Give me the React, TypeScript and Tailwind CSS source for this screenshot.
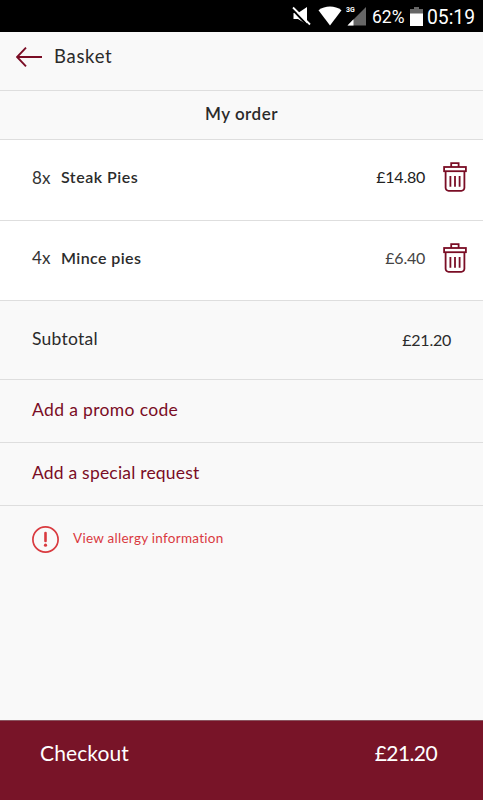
interface OrderItem {
  quantity: number;
  name: string;
  price: string;
  nameClass: string;
  priceClass: string;
}

const items: OrderItem[] = [
  {
    quantity: 8,
    name: 'Steak Pies',
    price: '£14.80',
    nameClass: 'tracking-[0.5px]',
    priceClass: 'text-[#222222]',
  },
  {
    quantity: 4,
    name: 'Mince pies',
    price: '£6.40',
    nameClass: 'tracking-[0.4px]',
    priceClass: 'text-[#444444]',
  },
];

function TrashIcon() {
  return (
    <svg className="w-6 h-[30px]" viewBox="0 0 24 30" fill="none" stroke="#7a0d25" strokeWidth="1.8">
      <path d="M8.2 5V1.2h7.4V5" />
      <rect x="1.1" y="5" width="21.8" height="4.2" />
      <path d="M2.6 9.2v16.6a3 3 0 0 0 3 3h12.8a3 3 0 0 0 3-3V9.2" />
      <path d="M7.4 14v10.8M12 14v10.8M16.6 14v10.8" />
    </svg>
  );
}

function StatusBar() {
  return (
    <div className="flex items-center h-8 bg-black text-white pl-[292px] shrink-0 font-[Roboto,sans-serif]">
      {/* Muted speaker */}
      <svg className="w-[19px] h-[20px] shrink-0" viewBox="0 0 19 20" fill="white">
        <path d="M1.5 7H6l9-6v17.5L6 13H1.5z" />
        <path d="M0 3l16 17" stroke="black" strokeWidth="2" />
        <path d="M1 1.5l17 17" stroke="white" strokeWidth="1.8" />
      </svg>
      {/* Wifi */}
      <svg className="w-[24px] h-[20px] ml-[7px] shrink-0" viewBox="0 0 24 20" fill="white">
        <path d="M0.5 4.2C7-.8 17-.8 23.5 4.2L12 19.5z" />
      </svg>
      {/* Mobile signal */}
      <div className="relative w-[21px] h-[20px] ml-[4px] shrink-0">
        <svg className="w-full h-full" viewBox="0 0 21 20">
          <path d="M20 1v18.5H1.5z" fill="#666666" />
          <path d="M7.5 13.3v6.2h-6z" fill="white" />
        </svg>
        <span className="absolute left-0 top-px text-[7px] leading-[7px] font-bold">3G</span>
      </div>
      <span className="w-[34px] ml-[5px] text-[17.5px] leading-8 pt-[2px] whitespace-nowrap shrink-0">62%</span>
      {/* Battery */}
      <svg className="w-[13px] h-[19px] ml-[4px] shrink-0" viewBox="0 0 13 19">
        <path d="M4 0h5v2h4v5H0V2h4z" fill="#666666" />
        <path d="M0 6.5h13V19H0z" fill="white" />
      </svg>
      <span className="ml-[4px] text-[19.3px] leading-8 pt-[3px]">05:19</span>
    </div>
  );
}

function OrderRow({ item }: { item: OrderItem }) {
  return (
    <div className="flex items-center h-[80.5px] bg-white border-b border-[#dedede] pl-8 pr-4 pb-[5px] shrink-0">
      <span className="w-[29px] text-[17px] text-[#333333]">{item.quantity}x</span>
      <span className={`text-[16px] font-semibold text-[#2b2b2b] ${item.nameClass}`}>{item.name}</span>
      <span className={`ml-auto mr-[18px] text-[16px] tracking-[-0.25px] ${item.priceClass}`}>{item.price}</span>
      <button aria-label={`Remove ${item.name}`}>
        <TrashIcon />
      </button>
    </div>
  );
}

export default function App() {
  return (
    <div className="flex flex-col w-full h-screen overflow-hidden bg-[#f9f9f9] text-[#2b2b2b] font-[Lato,sans-serif]">
      <StatusBar />

      {/* Header */}
      <header className="flex items-center h-[59px] border-b border-[#dedede] pl-4 pb-[9px] shrink-0">
        <svg className="w-[26px] h-5" viewBox="0 0 26 20" fill="none" stroke="#7a0d25" strokeWidth="1.9">
          <path d="M26 10H1M10 .7L1 10l9 9.3" />
        </svg>
        <h1 className="ml-3 text-[18.5px] tracking-[0.7px]">Basket</h1>
      </header>

      <h2 className="flex items-center justify-center h-[49px] border-b border-[#dedede] text-[17px] font-semibold tracking-[0.5px] pb-[2px] shrink-0">
        My order
      </h2>

      {items.map((item) => (
        <OrderRow key={item.name} item={item} />
      ))}

      <div className="flex items-center justify-between h-[79px] border-b border-[#dedede] pl-8 pr-8 shrink-0">
        <span className="text-[17.5px] tracking-[0.25px] pb-[2px]">Subtotal</span>
        <span className="text-[16px] tracking-[-0.25px]">£21.20</span>
      </div>

      <button className="flex items-center h-[63px] border-b border-[#dedede] pl-8 text-[17.5px] text-[#7a0d25] tracking-[0.35px] pb-[2px] shrink-0">
        Add a promo code
      </button>
      <button className="flex items-center h-[63px] border-b border-[#dedede] pl-8 text-[17.5px] text-[#7a0d25] tracking-[0.2px] pb-[2px] shrink-0">
        Add a special request
      </button>

      {/* Allergy notice */}
      <button className="flex items-center h-[68px] pl-8 pb-px text-[#d93a3f] shrink-0">
        <svg className="w-[27px] h-[27px]" viewBox="0 0 27 27" fill="none" stroke="currentColor">
          <circle cx="13.5" cy="13.5" r="12.6" strokeWidth="1.7" />
          <path d="M13.5 7v8" strokeWidth="2.6" strokeLinecap="round" />
          <circle cx="13.5" cy="19.2" r="1.6" fill="currentColor" stroke="none" />
        </svg>
        <span className="ml-[14px] pb-[2px] text-[13.5px] tracking-[0.27px]">View allergy information</span>
      </button>

      {/* Checkout bar */}
      <button className="flex items-center justify-between h-20 mt-auto bg-[#781428] text-white border-t border-[#8a5560] pl-10 pr-[46px] pb-[16px] text-[21px] shrink-0">
        <span className="tracking-[0.1px]">Checkout</span>
        <span className="tracking-[-0.6px]">£21.20</span>
      </button>
    </div>
  );
}
